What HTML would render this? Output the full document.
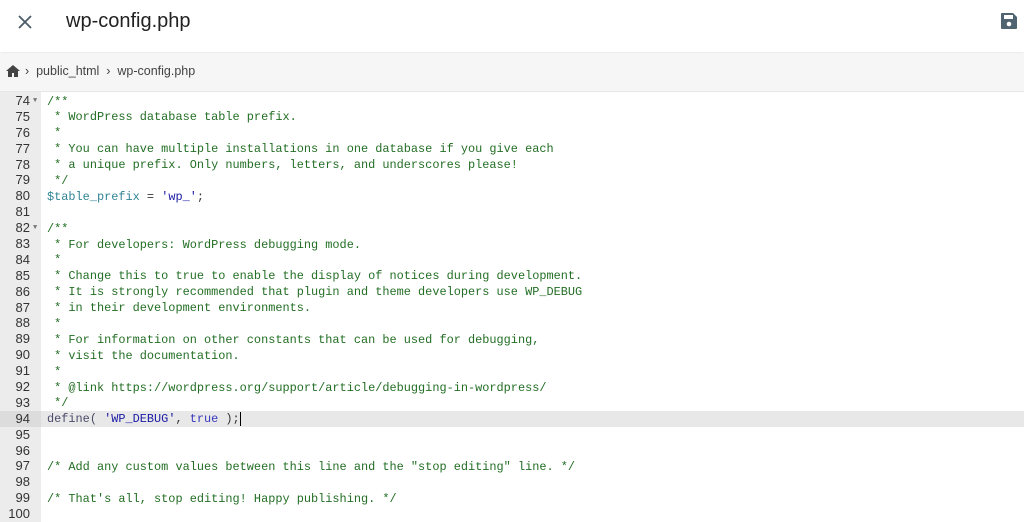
<!DOCTYPE html>
<html><head><style>
body{margin:0;width:1024px;height:521px;overflow:hidden;background:#fff;font-family:"Liberation Sans",sans-serif;position:relative}
.top{position:absolute;left:0;top:0;width:1024px;height:52px;background:#fff;box-shadow:0 1px 3px rgba(0,0,0,.12)}
.title{position:absolute;left:66px;top:10px;font-size:20px;color:#222}
.crumb{position:absolute;left:0;top:53px;width:1024px;height:38px;background:#f6f6f7;border-bottom:1px solid #e6e6e6;font-size:12.5px;color:#444}
.gut{position:absolute;left:0;top:92px;width:41px;height:430px;background:#ececec}
.code{position:absolute;left:0;top:93px;width:1024px;font-family:"Liberation Mono",monospace;font-size:11.9px}
.l{height:15.9px;line-height:15.9px;position:relative;white-space:pre}
.n{position:absolute;left:0;width:30px;text-align:right;color:#333;font-family:"Liberation Sans",sans-serif;font-size:13px}
.t{position:absolute;left:47px;top:1.5px;color:#236e24}
.hl{background:#e8e8e8}
.f{position:absolute;left:33px;top:1px;color:#777;font-size:7px}
.v{color:#318495}.s{color:#1a1aa6}.k{color:#333}.b{color:#3636c0}
</style></head><body>
<div class="top">
<svg style="position:absolute;left:17px;top:14px" width="16" height="16" viewBox="0 0 16 16"><path d="M2 2L14 14M14 2L2 14" stroke="#4a5a66" stroke-width="1.8"/></svg>
<div class="title">wp-config.php</div>
<svg style="position:absolute;left:999px;top:11px" width="20" height="20" viewBox="0 0 20 20"><path d="M2 3a1 1 0 0 1 1-1h11l4 4v11a1 1 0 0 1-1 1H3a1 1 0 0 1-1-1z" fill="#4f6470"/><rect x="5" y="4" width="9" height="4" fill="#fff"/><circle cx="10" cy="13" r="2.3" fill="#fff"/></svg>
</div>
<div class="crumb">
<svg style="position:absolute;left:6px;top:12px" width="14" height="12" viewBox="0 0 14 12"><path d="M7 0L0 6h2v6h4V8h2v4h4V6h2z" fill="#444"/></svg>
<span style="position:absolute;left:25px;top:11px">›&nbsp; public_html &nbsp;›&nbsp; wp-config.php</span>
</div>
<div class="gut"></div>
<div class="code">
<div class="l"><span class="n">74</span><span class="f">▼</span><span class="t">/**</span></div>
<div class="l"><span class="n">75</span><span class="t"> * WordPress database table prefix.</span></div>
<div class="l"><span class="n">76</span><span class="t"> *</span></div>
<div class="l"><span class="n">77</span><span class="t"> * You can have multiple installations in one database if you give each</span></div>
<div class="l"><span class="n">78</span><span class="t"> * a unique prefix. Only numbers, letters, and underscores please!</span></div>
<div class="l"><span class="n">79</span><span class="t"> */</span></div>
<div class="l"><span class="n">80</span><span class="t"><span class="v">$table_prefix</span><span class="k"> = </span><span class="s">'wp_'</span><span class="k">;</span></span></div>
<div class="l"><span class="n">81</span></div>
<div class="l"><span class="n">82</span><span class="f">▼</span><span class="t">/**</span></div>
<div class="l"><span class="n">83</span><span class="t"> * For developers: WordPress debugging mode.</span></div>
<div class="l"><span class="n">84</span><span class="t"> *</span></div>
<div class="l"><span class="n">85</span><span class="t"> * Change this to true to enable the display of notices during development.</span></div>
<div class="l"><span class="n">86</span><span class="t"> * It is strongly recommended that plugin and theme developers use WP_DEBUG</span></div>
<div class="l"><span class="n">87</span><span class="t"> * in their development environments.</span></div>
<div class="l"><span class="n">88</span><span class="t"> *</span></div>
<div class="l"><span class="n">89</span><span class="t"> * For information on other constants that can be used for debugging,</span></div>
<div class="l"><span class="n">90</span><span class="t"> * visit the documentation.</span></div>
<div class="l"><span class="n">91</span><span class="t"> *</span></div>
<div class="l"><span class="n">92</span><span class="t"> * @link https://wordpress.org/support/article/debugging-in-wordpress/</span></div>
<div class="l"><span class="n">93</span><span class="t"> */</span></div>
<div class="l hl"><span style="position:absolute;left:0;top:0;width:41px;height:15.9px;background:#dcdcdc"></span><span class="n">94</span><span class="t"><span class="k" style="color:#4b4b6b">define( </span><span class="s">'WP_DEBUG'</span><span class="k">, </span><span class="b">true</span><span class="k"> );</span><span style="border-left:1.5px solid #000"></span></span></div>
<div class="l"><span class="n">95</span></div>
<div class="l"><span class="n">96</span></div>
<div class="l"><span class="n">97</span><span class="t">/* Add any custom values between this line and the "stop editing" line. */</span></div>
<div class="l"><span class="n">98</span></div>
<div class="l"><span class="n">99</span><span class="t">/* That's all, stop editing! Happy publishing. */</span></div>
<div class="l"><span class="n">100</span></div>
</div>
</body></html>
